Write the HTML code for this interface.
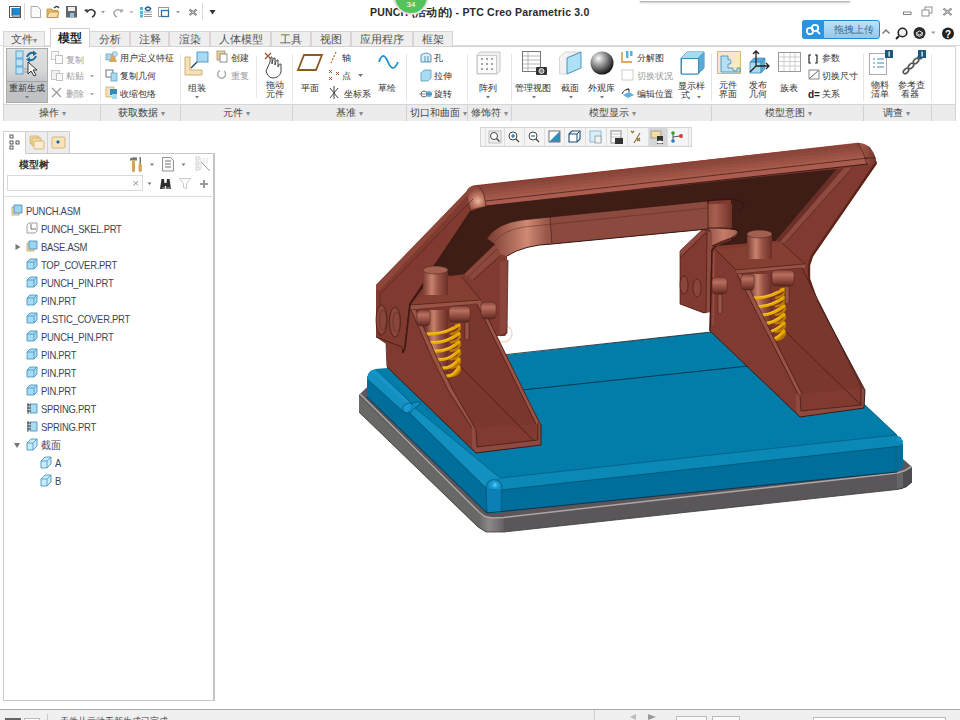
<!DOCTYPE html>
<html><head><meta charset="utf-8">
<style>
*{margin:0;padding:0;box-sizing:border-box}
html,body{width:960px;height:720px;overflow:hidden;background:#fff;font-family:"Liberation Sans",sans-serif;color:#333}
.a{position:absolute}
.t{position:absolute;white-space:nowrap;font-size:11px;line-height:12px;color:#3a3a3a}
.tab{position:absolute;top:31px;height:15px;background:#eeeeee;border:1px solid #dcd4d4;border-bottom:none;font-size:11px;line-height:14px;text-align:center;color:#555}
.tabA{position:absolute;top:28px;height:19px;background:#fff;border:1px solid #d6cccc;border-bottom:none;font-size:11.5px;line-height:18px;text-align:center;color:#222;font-weight:bold}
#ribbon{left:3px;top:46px;width:953px;height:75px;background:#fff;border:1px solid #d8d2d2}
#glabels{left:4px;top:104px;width:951px;height:17px;background:#ececec;border-top:1px solid #d6d6d6}
.gl{position:absolute;top:107px;font-size:10px;line-height:12px;color:#444}
.sep{position:absolute;top:105px;width:1px;height:16px;background:#d2d2d2}
.rt{position:absolute;white-space:nowrap;font-size:11px;line-height:12px;color:#333}
.rtg{position:absolute;white-space:nowrap;font-size:11px;line-height:12px;color:#9c9c9c}
.tr{position:absolute;white-space:nowrap;font-size:10.5px;letter-spacing:-0.3px;line-height:12px;color:#3a4656;transform:scaleX(0.9);transform-origin:0 0}
</style></head><body>

<svg class="a" style="left:0;top:0" width="960" height="720" viewBox="0 0 960 720">
<defs>
<linearGradient id="gstrip" x1="470" y1="0" x2="876" y2="0" gradientUnits="userSpaceOnUse">
 <stop offset="0" stop-color="#a05a4c"/><stop offset="0.15" stop-color="#8e4b3f"/><stop offset="1" stop-color="#8c483c"/>
</linearGradient>
<linearGradient id="gcyl" x1="0" y1="0" x2="1" y2="0">
 <stop offset="0" stop-color="#7a3a30"/><stop offset="0.35" stop-color="#c8826e"/><stop offset="0.6" stop-color="#9a5548"/><stop offset="1" stop-color="#6a2e26"/>
</linearGradient>
<linearGradient id="gbeam" x1="487" y1="0" x2="560" y2="0" gradientUnits="userSpaceOnUse">
 <stop offset="0" stop-color="#7a3a30"/><stop offset="0.55" stop-color="#d08a74"/><stop offset="0.8" stop-color="#9c5a4c"/><stop offset="1" stop-color="#8a483c"/>
</linearGradient>
<linearGradient id="gcorner" x1="0" y1="0" x2="1" y2="0">
 <stop offset="0" stop-color="#8a463a"/><stop offset="0.6" stop-color="#e0a090"/><stop offset="1" stop-color="#9a5648"/>
</linearGradient>
<linearGradient id="gpinh" x1="0" y1="0" x2="0" y2="1">
 <stop offset="0" stop-color="#8a463a"/><stop offset="0.3" stop-color="#b87060"/><stop offset="0.7" stop-color="#8a463a"/><stop offset="1" stop-color="#5a2820"/>
</linearGradient>
<linearGradient id="gplate" x1="0" y1="0" x2="1" y2="0">
 <stop offset="0" stop-color="#6a6a66"/><stop offset="1" stop-color="#5e5a5e"/>
</linearGradient>
</defs>

<!-- ===== GREY PLATE ===== -->
<polygon points="362,392 359,395 359,412 478,527 486,532 504,532 897,489.5 906,487 912,482 912,467 903,459 880,440 380,375" fill="#5a565a"/>
<polygon points="359,396 479,513 479,527 359,412" fill="#686965"/>
<defs><linearGradient id="gpc" x1="0" y1="0" x2="1" y2="0"><stop offset="0" stop-color="#6a6866"/><stop offset="0.4" stop-color="#8c888a"/><stop offset="0.7" stop-color="#7a7678"/><stop offset="1" stop-color="#625e62"/></linearGradient></defs>
<polygon points="479,513 486,517.5 504,517.4 504,532 486,532 479,527" fill="url(#gpc)"/>
<polygon points="897,473 905,470.5 912,467 912,482 906,487 897,489.5" fill="#4e4c50"/>
<polygon points="897,473 903,471 903,489 897,489.5" fill="#666466"/>
<polyline points="360,394 479,512 485,516.5 492,518 504,517.4 897,473 905,470.5 911.5,466.5" fill="none" stroke="#aca6a4" stroke-width="1.5"/>
<polyline points="359,412 478,527 486,532 504,532 897,489.5 906,487 912,482" fill="none" stroke="#3a3a3a" stroke-width="0.8"/>

<!-- ===== BLUE BASE ===== -->
<!-- faces -->
<polygon points="367,376 367,397 487,513 897,472 903,467 903,443 897,446 501,490 487,490 420,418 405,409" fill="#006e9a"/>
<!-- top -->
<polygon points="369,373 375,369 400,367 711,332 864,404 897,435 903,441 901,446 501,490 492,490 486,488 410,413 404,412 367,379" fill="#027ca9"/>
<!-- left rim band -->
<polygon points="367,379 368,374 371,370.5 376,369 412,403.7 403.7,412" fill="#1290c0"/>
<polygon points="410,413 411,404.4 500,478 493,481 486,488" fill="#1290c0"/>
<polygon points="371,371 376,369 412,403.7 408,405" fill="#1a9ad0" opacity="0.6"/>
<!-- front rim band -->
<polygon points="500,478 896,435 903,441 901,446 501,490 493,489" fill="#0a88b6"/>
<!-- front corner highlight -->
<defs><radialGradient id="gdome" cx="495" cy="485" r="8" gradientUnits="userSpaceOnUse"><stop offset="0" stop-color="#6cd0f4"/><stop offset="0.35" stop-color="#1aa0d6"/><stop offset="1" stop-color="#0a86bc"/></radialGradient></defs>
<path d="M486,489 Q486,480 494,479.6 Q502,480 502,489 Z" fill="url(#gdome)"/>
<path d="M486,489 Q486,480 494,479.6 Q502,480 502,489" fill="none" stroke="#04405e" stroke-width="0.6"/>
<ellipse cx="899" cy="439" rx="2.5" ry="2.5" fill="#1494c8"/>
<!-- front face corner -->
<polygon points="486,488 493,490 501,490 501,513 487,513" fill="#0c80b6"/>
<!-- lines -->
<polyline points="367.6,379.4 403.7,412" fill="none" stroke="#034a6a" stroke-width="0.7"/>
<polyline points="410,413.3 486,488 487,513" fill="none" stroke="#034a6a" stroke-width="0.7"/>
<polyline points="375.9,369.6 412,403.7" fill="none" stroke="#034a6a" stroke-width="0.7"/>
<polyline points="411,404.4 500,478 896,435" fill="none" stroke="#045a80" stroke-width="0.7"/>
<polyline points="419,403 480,452" fill="none" stroke="#045a80" stroke-width="0.5"/>
<polyline points="501,490 901,446" fill="none" stroke="#034a6a" stroke-width="0.7"/>
<polyline points="501,490 501,513" fill="none" stroke="#045a80" stroke-width="0.6"/>
<polyline points="896,446 896,472" fill="none" stroke="#045a80" stroke-width="0.6"/>
<polyline points="367,397 487,513 897,472" fill="none" stroke="#022a40" stroke-width="0.8"/>
<polyline points="864,404 897,435" fill="none" stroke="#034a6a" stroke-width="0.7"/>
<polyline points="502,355 711,332" fill="none" stroke="#1a1a1a" stroke-width="0.8"/>
<polyline points="522,390 748,366" fill="none" stroke="#04304a" stroke-width="0.9"/>
<!-- hinge step -->
<path d="M403.7,412 Q401,407 406,404 Q410,402 412,403.7 Q413,409 408,413 Z" fill="#1a9ad0" stroke="#04405e" stroke-width="0.6"/>
<path d="M411,404.4 Q416,400 421,403 l-6,5 Q412,410 410,413.3" fill="#0e8cc0" stroke="#04405e" stroke-width="0.6"/>

<circle cx="503.7" cy="333.7" r="8.3" fill="none" stroke="#f2d8ca" stroke-width="1.4"/>
<!-- ===== BROWN SILHOUETTE (arm face) ===== -->
<polygon points="466,192 469,188 472.5,186 477,185 859,143 870,147 877,163 812,257 809,266 809,279 817,300 865,390 864,408 800,417 796,394 710,331 710,311 704,313 680,304 680,251 702,230 710,229 700,230 552,244 527,246 507,255 507,333 505,336 497,336 541,426 541,445 476,453 387,367 386,344 376,337 376,285" fill="#803a2f"/>

<!-- ===== DARK UNDERSIDE ===== -->
<polygon points="471,211 486,206 836,169 775,241 716,246 731,240 731,200 708,201 550,217 520,224 499,229 487,238 495,244 465,274 450,276 432,268" fill="#3d1d16"/>

<!-- strip front face -->
<polygon points="476.0,186.0 861.0,143.0 862.4,146.3 478.0,189.3" fill="#8a463b"/>
<polygon points="478.0,189.0 862.4,146.0 863.8,149.3 480.0,192.3" fill="#8f4a3e"/>
<polygon points="480.0,192.0 863.8,149.0 865.2,152.3 482.0,195.3" fill="#964f42"/>
<polygon points="482.0,195.0 865.2,152.0 866.6,155.3 484.0,198.3" fill="#9e5546"/>
<polygon points="484.0,198.0 866.6,155.0 868.0,158.3 486.0,201.3" fill="#a65a4b"/>
<polygon points="478,199 486,201 868,158 868,164 486,206" fill="#ac5c4e"/>
<defs><radialGradient id="gknob" cx="478" cy="201" r="12" gradientUnits="userSpaceOnUse"><stop offset="0" stop-color="#f0b8a0"/><stop offset="0.45" stop-color="#c07a68"/><stop offset="1" stop-color="#8e4a3e"/></radialGradient></defs>
<path d="M466,192 Q469,185 477,185 Q484,190 485,200 L486,206 Q478,207 470.5,209.5 Q466,202 466,192 Z" fill="url(#gknob)"/>
<path d="M477,185 Q484,190 485,200 L486,206 M466,193 Q468,203 470.5,209.5" fill="none" stroke="#3a1a14" stroke-width="0.6"/>
<defs><linearGradient id="gknobR" x1="0" y1="0" x2="1" y2="0"><stop offset="0" stop-color="#9c5848"/><stop offset="0.5" stop-color="#8e4a3e"/><stop offset="1" stop-color="#6e3229"/></linearGradient></defs>
<path d="M858,143 Q870,143 875,156 L877,164 L867,165 Q864,152 858,143 Z" fill="url(#gknobR)"/>
<path d="M858,143 Q864,152 867,165 M866,158 L876,158" fill="none" stroke="#3a1a14" stroke-width="0.6"/>
<polyline points="486,201 868,158" fill="none" stroke="#2a1210" stroke-width="0.6"/>
<polyline points="486,206 868,164" fill="none" stroke="#2a1210" stroke-width="0.8"/>
<polyline points="472,187 859,143" fill="none" stroke="#9a3a30" stroke-width="0.7"/>

<!-- left arm outer bevel -->
<polygon points="466,192 468,195 380,290 376,290 376,285" fill="#8c463a"/>
<polyline points="473,199 380,294 380,336" fill="none" stroke="#4a2018" stroke-width="0.6"/>
<!-- right arm outer bevel -->
<polyline points="876,163 812,256 809,265 809,279 816,299" fill="none" stroke="#5a2418" stroke-width="2.4"/>

<!-- left arm inner flange -->
<polyline points="471,211 410,304" fill="none" stroke="#3a1a14" stroke-width="1.5"/>
<!-- beam flange -->
<polygon points="495,244 500,256 473,280 464,274" fill="#8c483c"/>
<path d="M497,249 L468,277" fill="none" stroke="#5a2820" stroke-width="0.6"/>
<path d="M495,244 L464,274 M500,256 L473,280" fill="none" stroke="#3a1a14" stroke-width="0.6"/>
<!-- beam -->
<path d="M487,238 Q497,223 522,220 L550,217 L708,201 L708,229 L552,244 Q524,245 507,256 L500,254 L495,244 Z" fill="#8c493d"/>
<path d="M487,238 Q497,223 522,220 L550,217 L552,244 Q524,245 507,256 L500,254 L495,244 Z" fill="url(#gbeam)"/>
<polyline points="550,217 552,244" fill="none" stroke="#3a1a14" stroke-width="0.6"/>
<path d="M487,238 Q497,223 522,220 L550,217 L708,201" fill="none" stroke="#2a1210" stroke-width="0.7"/>
<path d="M507,256 Q524,245 552,244 L708,229" fill="none" stroke="#2a1210" stroke-width="0.9"/>
<path d="M493,243 Q503,230 524,227 L708,208" fill="none" stroke="#5a2a20" stroke-width="0.5"/>
<!-- beam boss right -->
<defs><linearGradient id="gboss" x1="0" y1="0" x2="1" y2="0"><stop offset="0" stop-color="#96503f"/><stop offset="0.3" stop-color="#a86050"/><stop offset="0.7" stop-color="#8a463a"/><stop offset="1" stop-color="#6e3229"/></linearGradient>
<linearGradient id="gboss2" x1="0" y1="0" x2="1" y2="0"><stop offset="0" stop-color="#9a5648"/><stop offset="0.5" stop-color="#c47c6a"/><stop offset="1" stop-color="#a86252"/></linearGradient></defs>
<rect x="708" y="204" width="24" height="24" fill="url(#gboss)"/>
<path d="M708,204 L708,201 Q735,196 744,203 Q745,209 738,212" fill="none" stroke="#2a1210" stroke-width="0.7"/>
<path d="M709,228 L735,230 Q741,232 734,237 Q720,240 712,246 Z" fill="url(#gboss2)"/>
<path d="M708,228 Q735,227 739,231 Q736,238 712,246" fill="none" stroke="#2a1210" stroke-width="0.8"/>
<polyline points="708,201 708,229" fill="none" stroke="#2a1210" stroke-width="0.6"/>

<!-- right flange -->
<polygon points="836,169 853,167 785,243 775,241" fill="#8e4a3e"/>
<polygon points="836,169 844,168 780,242 775,241" fill="#6a3028"/>
<polyline points="836,169 775,241" fill="none" stroke="#2a1210" stroke-width="0.7"/>
<polyline points="853,167 785,243" fill="none" stroke="#4a2018" stroke-width="0.6"/>

<!-- ===== LEFT ARM DETAILS ===== -->
<!-- outer plate -->
<polyline points="376,337 402,347 403,353" fill="none" stroke="#3a1a14" stroke-width="0.8"/>
<polyline points="386,344 387,367" fill="none" stroke="#3a1a14" stroke-width="0.6"/>
<!-- fold line -->
<polyline points="437,268 410,304 405,348 403,353" fill="none" stroke="#3a1a14" stroke-width="1.6"/>
<polyline points="410,310 405,350" fill="none" stroke="#a05a4c" stroke-width="1"/>
<!-- bolts -->
<ellipse cx="381.5" cy="320" rx="5.5" ry="15" fill="#8a463a" stroke="#3a1a14" stroke-width="0.7"/>
<ellipse cx="383" cy="320" rx="3.5" ry="10" fill="none" stroke="#5a2820" stroke-width="0.6"/>
<ellipse cx="395" cy="322" rx="5.5" ry="15" fill="#8a463a" stroke="#3a1a14" stroke-width="0.7"/>
<ellipse cx="396.5" cy="322" rx="3.5" ry="10" fill="none" stroke="#5a2820" stroke-width="0.6"/>
<!-- platform -->
<polygon points="410,305 447,279 462,277 481,300" fill="#843e32"/>
<polygon points="410,305 481,300 481,304 411,310" fill="#9a5244"/>
<path d="M410,305 L481,300 M411,310 L477,304 M462,277 L481,300" fill="none" stroke="#3a1a14" stroke-width="0.6"/>
<!-- housing interior -->
<polygon points="411,310 477,304 541,424 472,428" fill="#7c372c"/>
<polygon points="477,304 481,304 540,424 536,424" fill="#9a5244"/>
<path d="M477,304 L536,424 M481,304 L540,424 M459,365 L536,443" fill="none" stroke="#3a1a14" stroke-width="0.7"/>
<!-- pin -->
<rect x="423" y="270" width="25" height="25" fill="url(#gcyl)"/>
<ellipse cx="435.5" cy="270" rx="12.5" ry="4" fill="#a4604f" stroke="#3a1a14" stroke-width="0.5"/>
<rect x="426" y="310" width="22" height="66" fill="url(#gcyl)"/>
<!-- spring -->
<g fill="none" stroke="#b87a00" stroke-width="2.6" stroke-linecap="round">
<path d="M456.0,325.0 q6,1 3,4.6 q-2,3.4 -8,4.2"/>
<path d="M456.0,333.5 q6,1 3,4.6 q-2,3.4 -8,4.2"/>
<path d="M456.0,342.0 q6,1 3,4.6 q-2,3.4 -8,4.2"/>
<path d="M456.0,350.5 q6,1 3,4.6 q-2,3.4 -8,4.2"/>
<path d="M456.0,359.0 q6,1 3,4.6 q-2,3.4 -8,4.2"/>
<path d="M456.0,367.0 q6,1 3,4.6 q-2,3.4 -8,4.2"/>
</g>
<g fill="none" stroke="#e8a800" stroke-width="3.2" stroke-linecap="round">
<path d="M424.5,334.0 Q443.5,335.5 459.0,325.0"/>
<path d="M428.5,342.5 Q445.3,344.0 459.0,333.5"/>
<path d="M432.5,351.0 Q447.1,352.5 459.0,342.0"/>
<path d="M437.0,359.5 Q449.1,361.0 459.0,350.5"/>
<path d="M441.0,368.0 Q450.9,369.5 459.0,359.0"/>
<path d="M445.5,376.0 Q452.9,377.5 459.0,367.0"/>
</g>
<g fill="none" stroke="#ffd24a" stroke-width="0.9" stroke-linecap="round" opacity="0.8">
<path d="M426.5,333.2 Q441.8,334.2 452.1,327.5"/>
<path d="M430.5,341.7 Q443.8,342.7 452.9,336.0"/>
<path d="M434.5,350.2 Q445.8,351.2 453.7,344.5"/>
<path d="M439.0,358.7 Q448.0,359.7 454.6,353.0"/>
<path d="M443.0,367.2 Q450.0,368.2 455.4,361.5"/>
<path d="M447.5,375.2 Q452.2,376.2 456.3,369.5"/>
</g>
<!-- V cover --><polygon points="410,304 411,310 433,360 448,390 472,428 476,453 387,367 386,352 403,353 405,348" fill="#803a2f"/>
<polygon points="411,310 416,310 438,360 453,390 476,430 472,428 448,390 433,360" fill="#9a5244"/>
<path d="M411,310 L433,360 L448,390 L472,428 M416,310 L438,360 L453,390 L476,430" fill="none" stroke="#3a1a14" stroke-width="0.7"/>
<polyline points="410,304 405,348 403,353" fill="none" stroke="#3a1a14" stroke-width="1.4"/>
<!-- cross pins -->
<rect x="417" y="310" width="13" height="16" rx="4" fill="url(#gpinh)" stroke="#4a2018" stroke-width="0.5"/>
<rect x="449" y="306" width="21" height="16" rx="4" fill="url(#gpinh)" stroke="#4a2018" stroke-width="0.5"/>
<rect x="481" y="302" width="15" height="17" rx="4" fill="url(#gpinh)" stroke="#4a2018" stroke-width="0.5"/>
<rect x="465" y="322" width="4" height="18" rx="2" fill="#9a5446" stroke="#3a1a14" stroke-width="0.5"/>
<!-- leaf right of left arm -->
<polygon points="500,262 508,260 507,333 500,336" fill="#8a463a"/>
<polyline points="508,260 507,333 500,336" fill="none" stroke="#3a1a14" stroke-width="0.7"/>
<!-- foot -->
<polygon points="472,428 476,430 477,447 538,440 538,423 541,424 541,445 476,453 472,447" fill="#8e4a3e"/>
<polyline points="476,430 477,447 538,440 538,423" fill="none" stroke="#3a1a14" stroke-width="0.7"/>
<polyline points="387,367 476,453 541,445 541,424" fill="none" stroke="#2a1210" stroke-width="0.8"/>

<!-- ===== RIGHT ARM DETAILS ===== -->
<!-- small plate -->
<polygon points="680,251 702,230 710,230 710,311 704,313 680,304" fill="#803a2f"/>
<polyline points="680,251 702,230 710,230 710,311 704,313 680,304 680,251" fill="none" stroke="#3a1a14" stroke-width="0.7"/>
<polygon points="680,251 702,230 706,231 681,256" fill="#8e4a3e"/>
<polyline points="681,257 706,233" fill="none" stroke="#3a1a14" stroke-width="0.6"/>
<polygon points="707,232 712,232 711,312 706,313" fill="#8e4a3e"/>
<polyline points="707,232 706,313" fill="none" stroke="#3a1a14" stroke-width="0.6"/>
<ellipse cx="684" cy="285" rx="4" ry="9" fill="#8a463a" stroke="#3a1a14" stroke-width="0.6"/>
<ellipse cx="697" cy="288" rx="4" ry="9" fill="#8a463a" stroke="#3a1a14" stroke-width="0.6"/>
<!-- vertical fold -->
<polyline points="716,246 712,250 710,331" fill="none" stroke="#3a1a14" stroke-width="1.2"/>
<polyline points="714,252 713,325" fill="none" stroke="#a05a4c" stroke-width="1"/>
<!-- platform -->
<polygon points="716,250 775,243 782,243 805,264 736,270" fill="#843e32"/>
<polygon points="736,270 805,264 805,268 737,274" fill="#9a5244"/>
<path d="M716,250 L736,270 L805,264 L782,243 M737,274 L802,268" fill="none" stroke="#3a1a14" stroke-width="0.6"/>
<!-- housing interior -->
<polygon points="737,274 802,268 862,388 798,394" fill="#7c372c"/>
<path d="M737,274 L798,394 M802,268 L862,388 M743,276 L800,392 M783,329 L862,406" fill="none" stroke="#3a1a14" stroke-width="0.7"/>
<!-- pin -->
<rect x="747" y="234" width="25" height="25" fill="url(#gcyl)"/>
<ellipse cx="759.5" cy="234" rx="12.5" ry="4" fill="#a4604f" stroke="#3a1a14" stroke-width="0.5"/>
<rect x="750" y="274" width="22" height="68" fill="url(#gcyl)"/>
<!-- spring -->
<g fill="none" stroke="#b87a00" stroke-width="2.6" stroke-linecap="round">
<path d="M781.0,289.0 q6,1 3,4.6 q-2,3.4 -8,4.2"/>
<path d="M781.0,297.5 q6,1 3,4.6 q-2,3.4 -8,4.2"/>
<path d="M781.0,306.0 q6,1 3,4.6 q-2,3.4 -8,4.2"/>
<path d="M781.0,314.5 q6,1 3,4.6 q-2,3.4 -8,4.2"/>
<path d="M781.0,323.0 q6,1 3,4.6 q-2,3.4 -8,4.2"/>
<path d="M781.0,331.0 q6,1 3,4.6 q-2,3.4 -8,4.2"/>
</g>
<g fill="none" stroke="#e8a800" stroke-width="3.2" stroke-linecap="round">
<path d="M748.5,298.0 Q768.0,299.5 784.0,289.0"/>
<path d="M752.0,306.5 Q769.6,308.0 784.0,297.5"/>
<path d="M755.5,315.0 Q771.2,316.5 784.0,306.0"/>
<path d="M759.0,323.5 Q772.8,325.0 784.0,314.5"/>
<path d="M762.5,332.0 Q774.3,333.5 784.0,323.0"/>
<path d="M766.0,340.0 Q775.9,341.5 784.0,331.0"/>
</g>
<g fill="none" stroke="#ffd24a" stroke-width="0.9" stroke-linecap="round" opacity="0.8">
<path d="M750.5,297.2 Q766.2,298.2 776.9,291.5"/>
<path d="M754.0,305.7 Q768.0,306.7 777.6,300.0"/>
<path d="M757.5,314.2 Q769.8,315.2 778.3,308.5"/>
<path d="M761.0,322.7 Q771.5,323.7 779.0,317.0"/>
<path d="M764.5,331.2 Q773.2,332.2 779.7,325.5"/>
<path d="M768.0,339.2 Q775.0,340.2 780.4,333.5"/>
</g>
<!-- V cover --><polygon points="716,250 736,270 737,274 798,394 800,417 710,331 712,250" fill="#803a2f"/>
<polygon points="737,274 742,274 802,394 798,394" fill="#9a5244"/>
<path d="M737,274 L798,394 M742,274 L802,394" fill="none" stroke="#3a1a14" stroke-width="0.7"/>
<polyline points="716,246 712,250 710,331" fill="none" stroke="#3a1a14" stroke-width="1.2"/>
<polyline points="714,252 713,325" fill="none" stroke="#a05a4c" stroke-width="1"/>
<path d="M716,250 L736,270" fill="none" stroke="#3a1a14" stroke-width="0.6"/>
<!-- cross pins -->
<rect x="712" y="277" width="15" height="17" rx="4" fill="url(#gpinh)" stroke="#4a2018" stroke-width="0.5"/>
<rect x="741" y="274" width="13" height="16" rx="4" fill="url(#gpinh)" stroke="#4a2018" stroke-width="0.5"/>
<rect x="772" y="270" width="22" height="16" rx="4" fill="url(#gpinh)" stroke="#4a2018" stroke-width="0.5"/>
<rect x="718" y="294" width="4" height="20" rx="2" fill="#9a5446" stroke="#3a1a14" stroke-width="0.5"/>
<rect x="785" y="286" width="4" height="18" rx="2" fill="#9a5446" stroke="#3a1a14" stroke-width="0.5"/>
<!-- foot -->
<polygon points="796,394 800,396 801,411 861,405 861,388 865,390 864,408 800,417 796,411" fill="#8e4a3e"/>
<polyline points="800,396 801,411 861,405 861,388" fill="none" stroke="#3a1a14" stroke-width="0.7"/>
<polyline points="710,331 800,417 864,408 865,390 817,300" fill="none" stroke="#2a1210" stroke-width="0.8"/>

</svg>

<!-- ============ TITLE BAR ============ -->
<svg class="a" style="left:0;top:0" width="230" height="26" viewBox="0 0 230 26">
 <rect x="9.5" y="6.5" width="11" height="11" fill="#fff" stroke="#555" stroke-width="1"/>
 <rect x="12" y="8" width="8" height="7" fill="#1a8ad4"/>
 <path d="M12 8 v8 h8" fill="none" stroke="#555" stroke-width="1"/>
 <line x1="24.5" y1="3" x2="24.5" y2="20" stroke="#e0d6d6"/>
 <path d="M31 6.5 h6.5 l3 3 v8 h-9.5z" fill="#fbfbfb" stroke="#aaa"/>
 <path d="M47 9 h5 l1 1.5 h5 v7 h-11z" fill="#e3b86a" stroke="#c08a3a" stroke-width="0.8"/>
 <path d="M49 12 h10 l-2 5.5 h-10z" fill="#f6dfa6" stroke="#c08a3a" stroke-width="0.8"/>
 <path d="M54 8 q3 -3 5 0" fill="none" stroke="#333" stroke-width="1.3"/>
 <rect x="66" y="6" width="11" height="11.5" fill="#666"/>
 <rect x="68" y="7" width="7" height="4" fill="#eee"/>
 <rect x="70" y="13" width="4" height="4" fill="#8cc4e8"/>
 <path d="M87 12 q4 -5 8 0 q0 4 -3 5" fill="none" stroke="#333" stroke-width="1.6"/>
 <path d="M84 10 l3.5 -1 l0 4z" fill="#333"/>
 <path d="M101 11 h4 l-2 2.5z" fill="#999"/>
 <path d="M122 12 q-4 -5 -8 0 q0 4 3 5" fill="none" stroke="#aaa" stroke-width="1.6"/>
 <path d="M124 10 l-3.5 -1 l0 4z" fill="#aaa"/>
 <path d="M129.5 11 h4 l-2 2.5z" fill="#bbb"/>
 <rect x="140" y="7" width="3" height="3" fill="#5ab0e0"/><rect x="140" y="11" width="3" height="3" fill="#5ab0e0"/><rect x="140" y="14.5" width="3" height="3" fill="#5ab0e0"/>
 <path d="M144 12 h8 M144 14.5 h8 M144 16.5 h8" stroke="#999" stroke-width="1"/>
 <path d="M145 9 q3 -4 6 0 M151 9 q-3 3 -6 0" fill="none" stroke="#1a6090" stroke-width="1.5"/>
 <rect x="158.5" y="7.5" width="10" height="9" fill="none" stroke="#999"/>
 <rect x="161.5" y="10.5" width="7" height="6" fill="#fff" stroke="#2a70a8" stroke-width="1.3"/>
 <path d="M176 11 h4 l-2 2.5z" fill="#999"/>
 <path d="M189.5 9.5 l7 5.5 M196.5 9.5 l-7 5.5" stroke="#555" stroke-width="2"/>
 <path d="M189.5 9.5 l7 5.5 M196.5 9.5 l-7 5.5" stroke="#fff" stroke-width="0.7"/>
 <line x1="202.5" y1="3" x2="202.5" y2="20" stroke="#e0d6d6"/>
 <path d="M209.5 10 h6 l-3 4.5z" fill="#333"/>
</svg>
<div class="a" style="left:640px;top:-6px;width:210px;height:8px;background:#fff;border-bottom:1px solid #b8b8b8;box-shadow:0 1px 2px #c8c8c8"></div>
<div class="t" style="left:370px;top:6px;font-size:10.5px;letter-spacing:0.2px;line-height:12px;font-weight:bold;color:#2a2a2a">PUNCH (活动的) - PTC Creo Parametric 3.0</div>
<div class="a" style="left:395px;top:-20px;width:32px;height:33px;border-radius:50%;background:#56c25c;box-shadow:0 0 0 2px #e2e2e2"></div>
<div class="a" style="left:402px;top:0px;width:18px;font-size:8px;line-height:9px;color:#fff;text-align:center">34</div>
<svg class="a" style="left:880px;top:0" width="80" height="46" viewBox="880 0 80 46">
 <rect x="903.5" y="12" width="7.5" height="2.5" fill="#fff" stroke="#666" stroke-width="0.8"/>
 <rect x="925" y="7" width="7" height="6" fill="#fff" stroke="#777" stroke-width="0.8"/>
 <rect x="922" y="10" width="7" height="6" fill="#fff" stroke="#777" stroke-width="0.8"/>
 <path d="M943.5 8.5 l8 6.5 M951.5 8.5 l-8 6.5" stroke="#666" stroke-width="2"/>
 <path d="M943.5 8.5 l8 6.5 M951.5 8.5 l-8 6.5" stroke="#fff" stroke-width="0.7"/>
 <path d="M882.5 33.5 l3.5 -3.5 l3.5 3.5" fill="none" stroke="#777" stroke-width="1.5"/>
 <circle cx="902.5" cy="32.5" r="4.3" fill="#f2f2f2" stroke="#222" stroke-width="1.6"/>
 <path d="M899 36 l-3 3" stroke="#222" stroke-width="2"/>
 <circle cx="919.5" cy="33" r="6" fill="#2b2b2b"/>
 <path d="M916 33 l3.5 -2 l3.5 2 l-3.5 2z M916 34.5 l3.5 2 l3.5 -2" fill="none" stroke="#fff" stroke-width="0.9"/>
 <path d="M931 31.5 h4.5 l-2.25 2.5z" fill="#999"/>
 <circle cx="948" cy="33.5" r="6" fill="#222"/>
 <text x="948" y="37.5" font-size="10" font-weight="bold" fill="#fff" text-anchor="middle" font-family="Liberation Sans">?</text>
</svg>
<div class="a" style="left:802px;top:20px;width:78px;height:19px;border-radius:3px;background:linear-gradient(#bfe2f8,#8fcaf0);border:1px solid #1f8ad8"></div>
<div class="a" style="left:802px;top:20px;width:22px;height:19px;border-radius:3px 0 0 3px;background:#2a94e0"></div>
<svg class="a" style="left:804px;top:22px" width="18" height="15" viewBox="0 0 18 15">
 <circle cx="6" cy="9" r="3.2" fill="none" stroke="#fff" stroke-width="1.8"/>
 <circle cx="11" cy="6" r="3.2" fill="none" stroke="#fff" stroke-width="1.8"/>
 <path d="M13 9 l3 3" stroke="#fff" stroke-width="1.8"/>
</svg>
<div class="t" style="left:834px;top:24px;font-size:10px;color:#3a6a90">拖拽上传</div>

<!-- ============ TABS ============ -->
<div class="a" style="left:0;top:45px;width:960px;height:1px;background:#ddd"></div>
<div class="tab" style="left:3px;width:42px">文件<span style="font-size:8px;color:#888">▾</span></div>
<div class="tab" style="left:89px;width:41px">分析</div>
<div class="tab" style="left:130px;width:39px">注释</div>
<div class="tab" style="left:169px;width:41px">渲染</div>
<div class="tab" style="left:210px;width:61px">人体模型</div>
<div class="tab" style="left:271px;width:40px">工具</div>
<div class="tab" style="left:311px;width:40px">视图</div>
<div class="tab" style="left:351px;width:62px">应用程序</div>
<div class="tab" style="left:413px;width:40px">框架</div>
<div id="ribbon" class="a"></div>
<div class="tabA" style="left:50px;width:40px">模型</div>
<div id="glabels" class="a"></div>
<!-- ============ RIBBON CONTENT ============ -->
<div class="a" style="left:6px;top:48px;width:42px;height:55px;background:linear-gradient(#dfe0e0 0%,#d6d8d8 40%,#c4c6c8 60%,#bfc0c3 100%);border:1px solid #a9aeb0"></div>
<div class="a" style="left:7px;top:81px;width:40px;height:1px;background:#a0a4a8"></div>
<svg class="a" style="left:0;top:44px" width="960" height="62" viewBox="0 44 960 62">
 <!-- regen -->
 <rect x="16" y="51" width="7" height="7" fill="#bfe3f5" stroke="#3a9ad0" stroke-width="0.8"/>
 <rect x="16" y="59" width="7" height="7" fill="#bfe3f5" stroke="#3a9ad0" stroke-width="0.8"/>
 <rect x="16" y="67" width="7" height="7" fill="#bfe3f5" stroke="#3a9ad0" stroke-width="0.8"/>
 <path d="M27 57 q2 -5 7 -4" fill="none" stroke="#1b6a99" stroke-width="2"/><path d="M33 50.5 l4 3 l-4 2.5z" fill="#1b6a99"/>
 <path d="M36 56 q-2 5 -7 4" fill="none" stroke="#1b6a99" stroke-width="2"/><path d="M30 62.5 l-4 -3 l4 -2.5z" fill="#1b6a99"/>
 <path d="M24 69 h10 M24 72 h10" stroke="#999" stroke-width="1"/>
 <path d="M28 62 l0 12 l3 -3 l3 5 l2 -1 l-3 -5 l4 0z" fill="#fff" stroke="#222" stroke-width="0.9"/>
 <path d="M25 96 h4 l-2 2.5z" fill="#777"/>
 <!-- copy/paste/delete grey -->
 <rect x="51.5" y="51.5" width="7" height="8" fill="#fafafa" stroke="#c8c8c8"/>
 <rect x="55.5" y="55.5" width="7" height="8" fill="#fafafa" stroke="#c0c0c0"/>
 <rect x="51.5" y="70.5" width="8" height="9" fill="#f0f0f0" stroke="#c8c8c8"/>
 <rect x="56.5" y="73.5" width="6" height="7" fill="#fafafa" stroke="#c0c0c0"/>
 <path d="M52 88 l9 9 M61 88 l-9 9" stroke="#9a9a9a" stroke-width="1.3"/>
 <path d="M90 75 h4 l-2 2.5z M90 93 h4 l-2 2.5z" fill="#aaa"/>
 <line x1="100.5" y1="54" x2="100.5" y2="101" stroke="#e4e4e4"/>
 <!-- get data icons -->
 <rect x="106" y="54" width="6" height="6" fill="#a8d8f0" stroke="#5aa0c8" stroke-width="0.7"/>
 <path d="M113 51 l4 11 h-8z" fill="#d9a860"/>
 <circle cx="115" cy="54" r="2.5" fill="#c0e0f4" stroke="#6aa8d0" stroke-width="0.6"/>
 <rect x="106" y="70" width="7" height="7" fill="#fff" stroke="#555" stroke-width="0.8"/>
 <rect x="111" y="73" width="6" height="8" fill="#a8daf2" stroke="#3a8ab8" stroke-width="0.6"/>
 <rect x="106" y="87" width="8" height="10" fill="#f2e2c0" stroke="#c8a060" stroke-width="0.7"/>
 <rect x="110" y="89" width="7" height="6" fill="#3a8ab8"/>
 <rect x="112" y="94" width="5" height="5" fill="#a8daf2"/>
 <line x1="180.5" y1="54" x2="180.5" y2="101" stroke="#e4e4e4"/>
 <!-- assemble -->
 <path d="M185 57 h5 v13 h12 v5 h-17z" fill="#f4e2b8" stroke="#c8a060" stroke-width="0.8"/>
 <rect x="197" y="52" width="11" height="10" fill="#a8daf2" stroke="#3a8ab8" stroke-width="0.8"/>
 <path d="M197 62 l-6 6" stroke="#1a3a5a" stroke-width="1.2"/>
 <path d="M195 96 h4 l-2 2.5z" fill="#777"/>
 <rect x="217" y="51" width="8" height="9" fill="#e8d0a0" stroke="#b09060" stroke-width="0.8"/>
 <rect x="220" y="54" width="7" height="8" fill="#fff" stroke="#777" stroke-width="0.8"/>
 <path d="M224 71 a4 4 0 1 1 -4 -0.5" fill="none" stroke="#b0b0b0" stroke-width="1.5"/>
 <line x1="256.5" y1="56" x2="256.5" y2="98" stroke="#e8e8e8"/>
 <path d="M265 53 l6 6 M271 53 l-6 6" stroke="#a0522d" stroke-width="1.3"/>
 <path d="M270 62 q0 -6 2 -5 v7 q1 -7 3 -6 v7 q1 -6 3 -5 v7 q1 -4 3 -3 v8 q-2 6 -8 6 q-5 0 -7 -7z" fill="#fff" stroke="#444" stroke-width="1"/>
 <line x1="292.5" y1="54" x2="292.5" y2="101" stroke="#e4e4e4"/>
 <!-- datum -->
 <path d="M298 70 l6 -15 h18 l-6 15z" fill="none" stroke="#8a5a20" stroke-width="1.8"/>
 <path d="M336 52 l-5 11" stroke="#b07020" stroke-width="1.2" stroke-dasharray="2,1.5"/>
 <path d="M329 70 l3 3 M332 70 l-3 3 M336 72 l3 3 M339 72 l-3 3 M329 77 l3 3 M332 77 l-3 3" stroke="#a0522d" stroke-width="1"/>
 <path d="M358 74 h5 l-2.5 3z" fill="#777"/>
 <path d="M330 88 l8 10 M338 88 l-8 10 M334 86 v13" stroke="#444" stroke-width="1"/>
 <path d="M379 62 q4 -12 9 0 q5 12 10 0" fill="none" stroke="#2090d0" stroke-width="1.8"/>
 <path d="M378 53 h21 M378 58 h21 M378 68 h21" stroke="#ddd" stroke-width="0.6" stroke-dasharray="1,2"/>
 <line x1="406.5" y1="54" x2="406.5" y2="101" stroke="#e4e4e4"/>
 <!-- holes -->
 <path d="M421 55 q5 -4 10 0 v7 h-10z" fill="#d8eef8" stroke="#3a7aa8" stroke-width="0.8"/>
 <path d="M425 56 v6 M428 56 v6" stroke="#3a7aa8" stroke-width="0.8"/>
 <path d="M421 73 l3 -3 h7 v8 l-3 3 h-7z" fill="#a8daf2" stroke="#5a9ac0" stroke-width="0.8"/>
 <circle cx="424" cy="94" r="3" fill="none" stroke="#444" stroke-width="0.8"/>
 <circle cx="429" cy="94" r="3" fill="#5ab0e0"/>
 <path d="M419 94 h13" stroke="#555" stroke-width="0.6"/>
 <line x1="467.5" y1="54" x2="467.5" y2="101" stroke="#e4e4e4"/>
 <!-- pattern -->
 <rect x="477" y="55" width="20" height="19" fill="#fbfbfb" stroke="#c8c8c8"/>
 <path d="M477 55 l3 -3 h20 v19 l-3 3" fill="#f0f0f0" stroke="#c8c8c8"/>
 <rect x="477.5" y="55.5" width="19" height="18" fill="#fcfcfc" stroke="#ccc"/>
 <path d="M481 59 h2 M486 59 h2 M491 59 h2 M481 64 h2 M486 64 h2 M491 64 h2 M481 69 h2 M486 69 h2 M491 69 h2" stroke="#888" stroke-width="1.6"/>
 <path d="M486 96 h4 l-2 2.5z" fill="#777"/>
 <line x1="511.5" y1="54" x2="511.5" y2="101" stroke="#e4e4e4"/>
 <!-- manage views -->
 <rect x="522.5" y="51.5" width="18" height="20" fill="#fff" stroke="#777"/>
 <path d="M523 56 h17 M523 60 h17 M523 64 h17 M523 68 h17 M528 52 v19" stroke="#999" stroke-width="0.7"/>
 <rect x="536" y="67" width="11" height="8" rx="1" fill="#333"/>
 <circle cx="541.5" cy="71" r="2.5" fill="#888" stroke="#fff" stroke-width="0.8"/>
 <path d="M532 96 h4 l-2 2.5z M569 96 h4 l-2 2.5z M600 96 h4 l-2 2.5z" fill="#777"/>
 <!-- section -->
 <path d="M559.5 57 l6 -5 h15 l-13 5 v17 h-8z" fill="#f2f2f2" stroke="#c8c8c8" stroke-width="0.7"/>
 <path d="M567 58 l14 -6 v16 l-14 6z" fill="#aee0f6" stroke="#3a8ab8" stroke-width="0.9"/>
 <!-- appearance -->
 <defs><radialGradient id="sph" cx="0.35" cy="0.3" r="0.7"><stop offset="0" stop-color="#fafafa"/><stop offset="0.5" stop-color="#8a8a8a"/><stop offset="1" stop-color="#1a1a1a"/></radialGradient></defs>
 <circle cx="602" cy="63" r="11.5" fill="url(#sph)"/>
 <!-- explode etc -->
 <path d="M622 52 v10 h10" fill="none" stroke="#d8a860" stroke-width="1.8"/>
 <rect x="626" y="51" width="2.5" height="7" fill="#5ab0e0"/><rect x="630" y="51" width="2.5" height="5" fill="#5ab0e0"/>
 <rect x="622" y="70" width="11" height="10" fill="none" stroke="#ccc" stroke-width="1"/>
 <path d="M622 94 q2 -5 7 -5 M626 90 l3 -1 v3" fill="none" stroke="#333" stroke-width="1"/>
 <path d="M623 95 l6 -3 l5 3 l-6 3z" fill="#5ab0e0"/>
 <!-- display style -->
 <path d="M681 58 l6 -6 h17 v16 l-6 6 h-17z" fill="#fff" stroke="#3a8ab8" stroke-width="1"/>
 <path d="M681 58 h17 l6 -6 M698 58 v16" fill="none" stroke="#3a8ab8" stroke-width="1"/>
 <path d="M681 58 l6 -6 h17 l-6 6z" fill="#a8daf2"/>
 <path d="M698 58 l6 -6 v16 l-6 6z" fill="#5aaad8"/>
 <path d="M681.5 58.5 h17 v15.5 h-17z" fill="#fff" stroke="#3a8ab8" stroke-width="1"/>
 <path d="M697 96 h4 l-2 2.5z" fill="#777"/>
 <line x1="711.5" y1="54" x2="711.5" y2="101" stroke="#e4e4e4"/>
 <!-- intent -->
 <rect x="717.5" y="51.5" width="23" height="22" fill="#f6e8c8" stroke="#d8b878"/>
 <path d="M721 56 h7 v4 q3 -2 3 2 q0 3 -3 2 v4 h5 q-1 3 2 3 q3 0 2 -3 h3 v4 h-19z" fill="#b8e0f4" stroke="#3a8ab8" stroke-width="0.8"/>
 <path d="M750 62 h11 v11 h-11z" fill="#a8daf2" stroke="#3a8ab8" stroke-width="0.8"/>
 <path d="M750 62 l4 -4 h11 l-4 4z M761 62 l4 -4 v11 l-4 4z" fill="#5aaad8" stroke="#3a8ab8" stroke-width="0.6"/>
 <path d="M756 66 v-15 M753 54 l3 -3 l3 3 M756 66 h13 M766 63 l3 3 l-3 3 M756 66 l-6 6" fill="none" stroke="#222" stroke-width="1.3"/>
 <rect x="778.5" y="52.5" width="22" height="19" fill="#fff" stroke="#999"/>
 <path d="M779 57 h21 M779 61.5 h21 M779 66 h21 M784 53 v18 M790 53 v18 M795 53 v18" stroke="#bbb" stroke-width="0.7"/>
 <path d="M811 55 h-2 v8 h2 M815 55 h2 v8 h-2" fill="none" stroke="#222" stroke-width="1.2"/>
 <rect x="809" y="70" width="10" height="9" fill="none" stroke="#555" stroke-width="0.7"/>
 <path d="M810 78 l8 -7" stroke="#333" stroke-width="0.8"/>
 <text x="808" y="98" font-size="10" font-weight="bold" fill="#222" font-family="Liberation Sans">d=</text>
 <line x1="863.5" y1="54" x2="863.5" y2="101" stroke="#e4e4e4"/>
 <!-- investigate -->
 <rect x="869.5" y="53.5" width="17" height="21" fill="#fff" stroke="#aaa"/>
 <path d="M873 59 h2 M877 59 h7 M873 63 h2 M877 63 h7 M873 67 h2 M877 67 h7" stroke="#3a8ab8" stroke-width="1"/>
 <rect x="885" y="50" width="8" height="8" fill="#1a5a80"/>
 <rect x="888.5" y="51.5" width="1.2" height="5" fill="#fff"/>
 <g fill="none" stroke="#555" stroke-width="1.6">
 <ellipse cx="906" cy="71" rx="3.2" ry="2" transform="rotate(-45 906 71)"/>
 <ellipse cx="911" cy="66" rx="3.2" ry="2" transform="rotate(-45 911 66)"/>
 <ellipse cx="916" cy="61" rx="3.2" ry="2" transform="rotate(-45 916 61)"/>
 <ellipse cx="921" cy="56" rx="3.2" ry="2" transform="rotate(-45 921 56)"/>
 </g>
 <rect x="918" y="50" width="8" height="8" fill="#1a5a80"/>
 <rect x="921.5" y="51.5" width="1.2" height="5" fill="#fff"/>
 <line x1="931.5" y1="54" x2="931.5" y2="101" stroke="#e4e4e4"/>
</svg>
<div class="rt" style="left:9px;top:81.5px;font-size:9px">重新生成</div>
<div class="rtg" style="left:66px;top:54px;font-size:9px">复制</div>
<div class="rtg" style="left:66px;top:70px;font-size:9px">粘贴</div>
<div class="rtg" style="left:66px;top:88px;font-size:9px">删除</div>
<div class="rt" style="left:120px;top:52px;font-size:9px">用户定义特征</div>
<div class="rt" style="left:120px;top:70px;font-size:9px">复制几何</div>
<div class="rt" style="left:120px;top:88px;font-size:9px">收缩包络</div>
<div class="rt" style="left:188px;top:81.5px;font-size:9px">组装</div>
<div class="rt" style="left:231px;top:52px;font-size:9px">创建</div>
<div class="rtg" style="left:231px;top:70px;font-size:9px">重复</div>
<div class="rt" style="left:266px;top:80.5px;font-size:9px;line-height:9.5px">拖动<br>元件</div>
<div class="rt" style="left:301px;top:81.5px;font-size:9px">平面</div>
<div class="rt" style="left:342px;top:52px;font-size:9px">轴</div>
<div class="rt" style="left:342px;top:70px;font-size:9px">点</div>
<div class="rt" style="left:344px;top:88px;font-size:9px">坐标系</div>
<div class="rt" style="left:378px;top:81.5px;font-size:9px">草绘</div>
<div class="rt" style="left:434px;top:52px;font-size:9px">孔</div>
<div class="rt" style="left:434px;top:70px;font-size:9px">拉伸</div>
<div class="rt" style="left:434px;top:88px;font-size:9px">旋转</div>
<div class="rt" style="left:479px;top:81.5px;font-size:9px">阵列</div>
<div class="rt" style="left:515px;top:81.5px;font-size:9px">管理视图</div>
<div class="rt" style="left:561px;top:81.5px;font-size:9px">截面</div>
<div class="rt" style="left:588px;top:81.5px;font-size:9px">外观库</div>
<div class="rt" style="left:637px;top:52px;font-size:9px">分解图</div>
<div class="rtg" style="left:637px;top:70px;font-size:9px">切换状况</div>
<div class="rt" style="left:637px;top:88px;font-size:9px">编辑位置</div>
<div class="rt" style="left:678px;top:81.5px;font-size:9px;line-height:9px">显示样<br>&nbsp;式</div>
<div class="rt" style="left:719px;top:80.5px;font-size:9px;line-height:9.5px">元件<br>界面</div>
<div class="rt" style="left:749px;top:80.5px;font-size:9px;line-height:9.5px">发布<br>几何</div>
<div class="rt" style="left:780px;top:81.5px;font-size:9px">族表</div>
<div class="rt" style="left:822px;top:52px;font-size:9px">参数</div>
<div class="rt" style="left:822px;top:70px;font-size:9px">切换尺寸</div>
<div class="rt" style="left:822px;top:88px;font-size:9px">关系</div>
<div class="rt" style="left:871px;top:80.5px;font-size:9px;line-height:9.5px">物料<br>清单</div>
<div class="rt" style="left:898px;top:80.5px;font-size:9px;line-height:9.5px">参考查<br>&nbsp;看器</div>

<div class="sep" style="left:100px"></div>
<div class="sep" style="left:180px"></div>
<div class="sep" style="left:292px"></div>
<div class="sep" style="left:406px"></div>
<div class="sep" style="left:467px"></div>
<div class="sep" style="left:511px"></div>
<div class="sep" style="left:711px"></div>
<div class="sep" style="left:863px"></div>
<div class="sep" style="left:931px"></div>
<div class="gl" style="left:39px">操作 <span style="font-size:8px;color:#888">▾</span></div>
<div class="gl" style="left:118px">获取数据 <span style="font-size:8px;color:#888">▾</span></div>
<div class="gl" style="left:223px">元件 <span style="font-size:8px;color:#888">▾</span></div>
<div class="gl" style="left:336px">基准 <span style="font-size:8px;color:#888">▾</span></div>
<div class="gl" style="left:410px">切口和曲面 <span style="font-size:8px;color:#888">▾</span></div>
<div class="gl" style="left:471px">修饰符 <span style="font-size:8px;color:#888">▾</span></div>
<div class="gl" style="left:589px">模型显示 <span style="font-size:8px;color:#888">▾</span></div>
<div class="gl" style="left:765px">模型意图 <span style="font-size:8px;color:#888">▾</span></div>
<div class="gl" style="left:883px">调查 <span style="font-size:8px;color:#888">▾</span></div>

<!-- ============ MODEL TREE ============ -->
<div class="a" style="left:25px;top:131px;width:23px;height:22px;background:#ededed;border:1px solid #d0d0d0;border-bottom:none"></div>
<div class="a" style="left:47px;top:131px;width:23px;height:22px;background:#ededed;border:1px solid #d0d0d0;border-bottom:none"></div>
<div class="a" style="left:3px;top:153px;width:212px;height:548px;border:1px solid #c8c8c8;border-right:2px solid #c4c4c4;background:#fff"></div>
<div class="a" style="left:3px;top:131px;width:23px;height:23px;background:#fff;border:1px solid #d0d0d0;border-bottom:none"></div>
<div class="a" style="left:7px;top:175px;width:136px;height:16px;border:1px solid #e0d8d8;background:#fff"></div>
<div class="a" style="left:4px;top:196px;width:210px;height:1px;background:#e2dcdc"></div>
<div class="t" style="left:19px;top:159px;font-size:10px;font-weight:bold;color:#333">模型树</div>
<svg class="a" style="left:0;top:125px" width="220" height="75" viewBox="0 125 220 75">
 <rect x="10" y="135" width="3" height="3" fill="none" stroke="#333" stroke-width="0.8"/>
 <rect x="10" y="141" width="3" height="3" fill="none" stroke="#333" stroke-width="0.8"/>
 <rect x="10" y="146" width="3" height="3" fill="none" stroke="#333" stroke-width="0.8"/>
 <rect x="16" y="141" width="3" height="3" fill="none" stroke="#333" stroke-width="0.8"/>
 <rect x="30" y="136" width="9" height="8" rx="1" fill="#f4dca0" stroke="#c8a060" stroke-width="0.7"/>
 <rect x="32" y="138" width="9" height="8" rx="1" fill="#f4dca0" stroke="#c8a060" stroke-width="0.7"/>
 <rect x="34" y="141" width="10" height="8" rx="1" fill="#faeccc" stroke="#c8a060" stroke-width="0.7"/>
 <rect x="52" y="137" width="13" height="11" rx="1" fill="#f8e4b8" stroke="#c8a060" stroke-width="0.7"/>
 <path d="M56 142 l2 -2 l2 2 l-2 2z" fill="#1a6a9a"/>
 <path d="M130 158.5 q3 -2 7 -1 v3 h-7z" fill="#777"/>
 <rect x="132" y="160.5" width="3" height="11.5" rx="1.2" fill="#d4a25a"/>
 <rect x="139.6" y="157" width="1.2" height="7" fill="#555"/>
 <rect x="138.6" y="163.5" width="3.2" height="8.5" rx="1.4" fill="#d4a25a"/>
 <path d="M150 163.5 h4 l-2 2.5z M181.5 163.5 h4 l-2 2.5z M147.5 182.5 h4 l-2 2.5z" fill="#777"/>
 <path d="M162.5 157.5 h8 l3 3 v10.5 h-11z" fill="#fafafa" stroke="#777" stroke-width="0.8"/>
 <path d="M165 161 h6 M165 164 h6 M165 167 h6" stroke="#555" stroke-width="0.8"/>
 <rect x="196" y="157" width="3" height="3" fill="none" stroke="#bbb" stroke-width="0.7"/>
 <rect x="196" y="162" width="3" height="3" fill="none" stroke="#bbb" stroke-width="0.7"/>
 <rect x="196" y="167" width="3" height="3" fill="none" stroke="#bbb" stroke-width="0.7"/>
 <path d="M201 158 v12 M204 158 v6 M207 158 v6" stroke="#ccc" stroke-width="0.7"/>
 <path d="M201 162 l9 9" stroke="#888" stroke-width="0.8"/>
 <path d="M133.5 181 l4.5 4.5 M138 181 l-4.5 4.5" stroke="#888" stroke-width="0.9"/>
 <path d="M161.5 179 h2.5 l0.5 4 h2 l0.5 -4 h2.5 l1.5 10 h-4.5 l-0.5 -3 h-1 l-0.5 3 h-4.5z" fill="#2e2e2e"/>
 <rect x="162" y="187" width="3.5" height="2" rx="1" fill="#777"/><rect x="167" y="187" width="3.5" height="2" rx="1" fill="#777"/>
 <path d="M179.5 178.5 h11 l-4 5 v5 l-3 -1 v-4z" fill="#fff" stroke="#bbb" stroke-width="0.8"/>
 <path d="M204 180 v8 M200 184 h8" stroke="#999" stroke-width="2"/>
</svg>
<svg class="a" style="left:0;top:195px" width="80" height="300" viewBox="0 195 80 300">
<path d="M12 207 h7 v8 h-7z" fill="#f2dca8" stroke="#c8a060" stroke-width="0.8"/>
<path d="M14 205 h8 v8 h-8z" fill="#9fd4f0" stroke="#3a8ab8" stroke-width="0.8"/>
<path d="M27 225 l2 -2 h8 v8 l-2 2 h-8z" fill="#fafafa" stroke="#888" stroke-width="0.8"/>
<path d="M31 224 v5 h5" fill="none" stroke="#555" stroke-width="0.8"/>
<path d="M27 243 h7 v8 h-7z" fill="#f2dca8" stroke="#c8a060" stroke-width="0.8"/>
<path d="M29 241 h8 v8 h-8z" fill="#9fd4f0" stroke="#3a8ab8" stroke-width="0.8"/>
<path d="M15.5 244 l5 3 l-5 3z" fill="#777"/>
<path d="M27 262 l3 -3 h7 v7 l-3 3 h-7z" fill="#a8dcf4" stroke="#3a8ab8" stroke-width="0.8"/>
<path d="M27 262 h7 l3 -3 M34 262 v7" fill="none" stroke="#3a8ab8" stroke-width="0.7"/>
<path d="M27 280 l3 -3 h7 v7 l-3 3 h-7z" fill="#a8dcf4" stroke="#3a8ab8" stroke-width="0.8"/>
<path d="M27 280 h7 l3 -3 M34 280 v7" fill="none" stroke="#3a8ab8" stroke-width="0.7"/>
<path d="M27 298 l3 -3 h7 v7 l-3 3 h-7z" fill="#a8dcf4" stroke="#3a8ab8" stroke-width="0.8"/>
<path d="M27 298 h7 l3 -3 M34 298 v7" fill="none" stroke="#3a8ab8" stroke-width="0.7"/>
<path d="M27 316 l3 -3 h7 v7 l-3 3 h-7z" fill="#a8dcf4" stroke="#3a8ab8" stroke-width="0.8"/>
<path d="M27 316 h7 l3 -3 M34 316 v7" fill="none" stroke="#3a8ab8" stroke-width="0.7"/>
<path d="M27 334 l3 -3 h7 v7 l-3 3 h-7z" fill="#a8dcf4" stroke="#3a8ab8" stroke-width="0.8"/>
<path d="M27 334 h7 l3 -3 M34 334 v7" fill="none" stroke="#3a8ab8" stroke-width="0.7"/>
<path d="M27 352 l3 -3 h7 v7 l-3 3 h-7z" fill="#a8dcf4" stroke="#3a8ab8" stroke-width="0.8"/>
<path d="M27 352 h7 l3 -3 M34 352 v7" fill="none" stroke="#3a8ab8" stroke-width="0.7"/>
<path d="M27 370 l3 -3 h7 v7 l-3 3 h-7z" fill="#a8dcf4" stroke="#3a8ab8" stroke-width="0.8"/>
<path d="M27 370 h7 l3 -3 M34 370 v7" fill="none" stroke="#3a8ab8" stroke-width="0.7"/>
<path d="M27 388 l3 -3 h7 v7 l-3 3 h-7z" fill="#a8dcf4" stroke="#3a8ab8" stroke-width="0.8"/>
<path d="M27 388 h7 l3 -3 M34 388 v7" fill="none" stroke="#3a8ab8" stroke-width="0.7"/>
<path d="M30 404 h7 v9 h-7z" fill="#a8dcf4" stroke="#3a8ab8" stroke-width="0.8"/>
<path d="M27 405 h4 M27 408 h4 M27 411 h4 M28 403 v11" stroke="#333" stroke-width="0.9"/>
<path d="M30 422 h7 v9 h-7z" fill="#a8dcf4" stroke="#3a8ab8" stroke-width="0.8"/>
<path d="M27 423 h4 M27 426 h4 M27 429 h4 M28 421 v11" stroke="#333" stroke-width="0.9"/>
<path d="M27 443 l4 -4 h6 v7 l-4 4 h-6z" fill="#c8ecfa" stroke="#3a8ab8" stroke-width="0.8"/>
<path d="M27 443 h6 l4 -4 M33 443 v7" fill="none" stroke="#3a8ab8" stroke-width="0.7"/>
<path d="M14 443 h6 l-3 5z" fill="#777"/>
<path d="M41 461 l4 -4 h6 v7 l-4 4 h-6z" fill="#c8ecfa" stroke="#3a8ab8" stroke-width="0.8"/>
<path d="M41 461 h6 l4 -4 M47 461 v7" fill="none" stroke="#3a8ab8" stroke-width="0.7"/>
<path d="M41 479 l4 -4 h6 v7 l-4 4 h-6z" fill="#c8ecfa" stroke="#3a8ab8" stroke-width="0.8"/>
<path d="M41 479 h6 l4 -4 M47 479 v7" fill="none" stroke="#3a8ab8" stroke-width="0.7"/>
</svg>
<div class="tr" style="left:25.6px;top:205px">PUNCH.ASM</div>
<div class="tr" style="left:41px;top:223px">PUNCH_SKEL.PRT</div>
<div class="tr" style="left:41px;top:241px">BASE.ASM</div>
<div class="tr" style="left:41px;top:259px">TOP_COVER.PRT</div>
<div class="tr" style="left:41px;top:277px">PUNCH_PIN.PRT</div>
<div class="tr" style="left:41px;top:295px">PIN.PRT</div>
<div class="tr" style="left:41px;top:313px">PLSTIC_COVER.PRT</div>
<div class="tr" style="left:41px;top:331px">PUNCH_PIN.PRT</div>
<div class="tr" style="left:41px;top:349px">PIN.PRT</div>
<div class="tr" style="left:41px;top:367px">PIN.PRT</div>
<div class="tr" style="left:41px;top:385px">PIN.PRT</div>
<div class="tr" style="left:41px;top:403px">SPRING.PRT</div>
<div class="tr" style="left:41px;top:421px">SPRING.PRT</div>
<div class="tr" style="left:41px;top:439px">截面</div>
<div class="tr" style="left:55px;top:457px">A</div>
<div class="tr" style="left:55px;top:475px">B</div>

<!-- ============ GRAPHICS TOOLBAR ============ -->
<div class="a" style="left:480px;top:127px;width:212px;height:20px;background:#f4f4f4;border:1px solid #d4d4d4"></div>
<div class="a" style="left:648px;top:128px;width:20px;height:18px;background:#d6d6d6"></div>
<svg class="a" style="left:480px;top:126px" width="214" height="22" viewBox="480 126 214 22">
 <path d="M485.5 128 v18 M504.5 128 v18 M524.5 128 v18 M544.5 128 v18 M564.5 128 v18 M585.5 128 v18 M606.5 128 v18 M627.5 128 v18 M648.5 128 v18 M667.5 128 v18 M688.5 128 v18" stroke="#e0e0e0"/>
 <rect x="489" y="131" width="12" height="12" fill="#eee" stroke="#aaa" stroke-width="0.7"/>
 <circle cx="494" cy="136" r="3.5" fill="#fff" stroke="#444" stroke-width="1"/><path d="M496.5 138.5 l3 3" stroke="#444" stroke-width="1.3"/>
 <circle cx="513" cy="136" r="4" fill="#fff" stroke="#444" stroke-width="1"/><path d="M511 136 h4 M513 134 v4" stroke="#1a6a9a" stroke-width="1.2"/><path d="M516 139 l3 3" stroke="#444" stroke-width="1.3"/>
 <circle cx="533" cy="136" r="4" fill="#fff" stroke="#444" stroke-width="1"/><path d="M531 136 h4" stroke="#1a6a9a" stroke-width="1.2"/><path d="M536 139 l3 3" stroke="#444" stroke-width="1.3"/>
 <rect x="549" y="131" width="11" height="11" fill="#fff" stroke="#555" stroke-width="0.8"/><path d="M549 142 l11 -11 v11z" fill="#3a8ab8"/>
 <path d="M569 134 l3 -3 h8 v8 l-3 3 h-8z" fill="#fff" stroke="#1a4a7a" stroke-width="1.1"/><path d="M569 134 h8 l3 -3 M577 134 v8" fill="none" stroke="#1a4a7a" stroke-width="1"/>
 <rect x="590" y="131" width="11" height="11" fill="#d8eef8" stroke="#7ab0d0" stroke-width="0.8"/><rect x="595" y="136" width="6" height="7" fill="#f4f4f4" stroke="#888" stroke-width="0.7"/>
 <rect x="611" y="131" width="10" height="12" fill="#fff" stroke="#777" stroke-width="0.8"/><path d="M611 134 h10 M611 137 h10" stroke="#999" stroke-width="0.6"/><rect x="615" y="138" width="8" height="6" fill="#333"/>
 <path d="M631 131 l2 2 M634 131 l-2 2 M640 133 l-6 10 M637 138 l3 3 M640 138 l-3 3" stroke="#8a6a30" stroke-width="1.1"/>
 <rect x="651" y="131" width="10" height="7" fill="#f4dca0" stroke="#888" stroke-width="0.7"/><rect x="657" y="136" width="6" height="8" fill="#333"/><ellipse cx="660" cy="142" rx="3" ry="1.5" fill="#fff"/>
 <path d="M673 133 v8 M673 137 l7 -1" stroke="#555" stroke-width="1"/><circle cx="673" cy="133" r="1.8" fill="#3a9a3a"/><circle cx="673" cy="141" r="1.8" fill="#2a7ab8"/><circle cx="681" cy="136" r="2" fill="#d04040"/>
</svg>

<!-- ============ STATUS BAR ============ -->
<div class="a" style="left:0;top:709px;width:960px;height:11px;background:#f0f0f0;border-top:1px solid #a8a8a8"></div>
<div class="a" style="left:5px;top:718px;width:16px;height:4px;background:#666"></div>
<div class="a" style="left:24px;top:718px;width:16px;height:4px;border:1px solid #bbb;background:#fafafa"></div>
<div class="a" style="left:60px;top:716px;width:110px;height:5px;overflow:hidden;font-size:9px;line-height:10px;color:#444">天件从元动无新生成已完成</div>
<div class="a" style="left:594px;top:710px;width:1px;height:10px;background:#d0d0d0"></div>
<div class="a" style="left:47px;top:714px;width:1px;height:6px;background:#c8c8c8"></div>
<svg class="a" style="left:620px;top:710px" width="50" height="10" viewBox="620 710 50 10"><path d="M636 720 l-6 -3 l6 -3z" fill="#bbb"/><path d="M648 714 l8 3 l-8 3z" fill="#999"/></svg>
<div class="a" style="left:676px;top:716px;width:31px;height:6px;border:1px solid #bbb;background:#fafafa"></div>
<div class="a" style="left:712px;top:716px;width:28px;height:6px;border:1px solid #bbb;background:#fafafa"></div>
<div class="a" style="left:813px;top:717px;width:133px;height:5px;border:1px solid #bbb;background:#fff"></div>

</body></html>
